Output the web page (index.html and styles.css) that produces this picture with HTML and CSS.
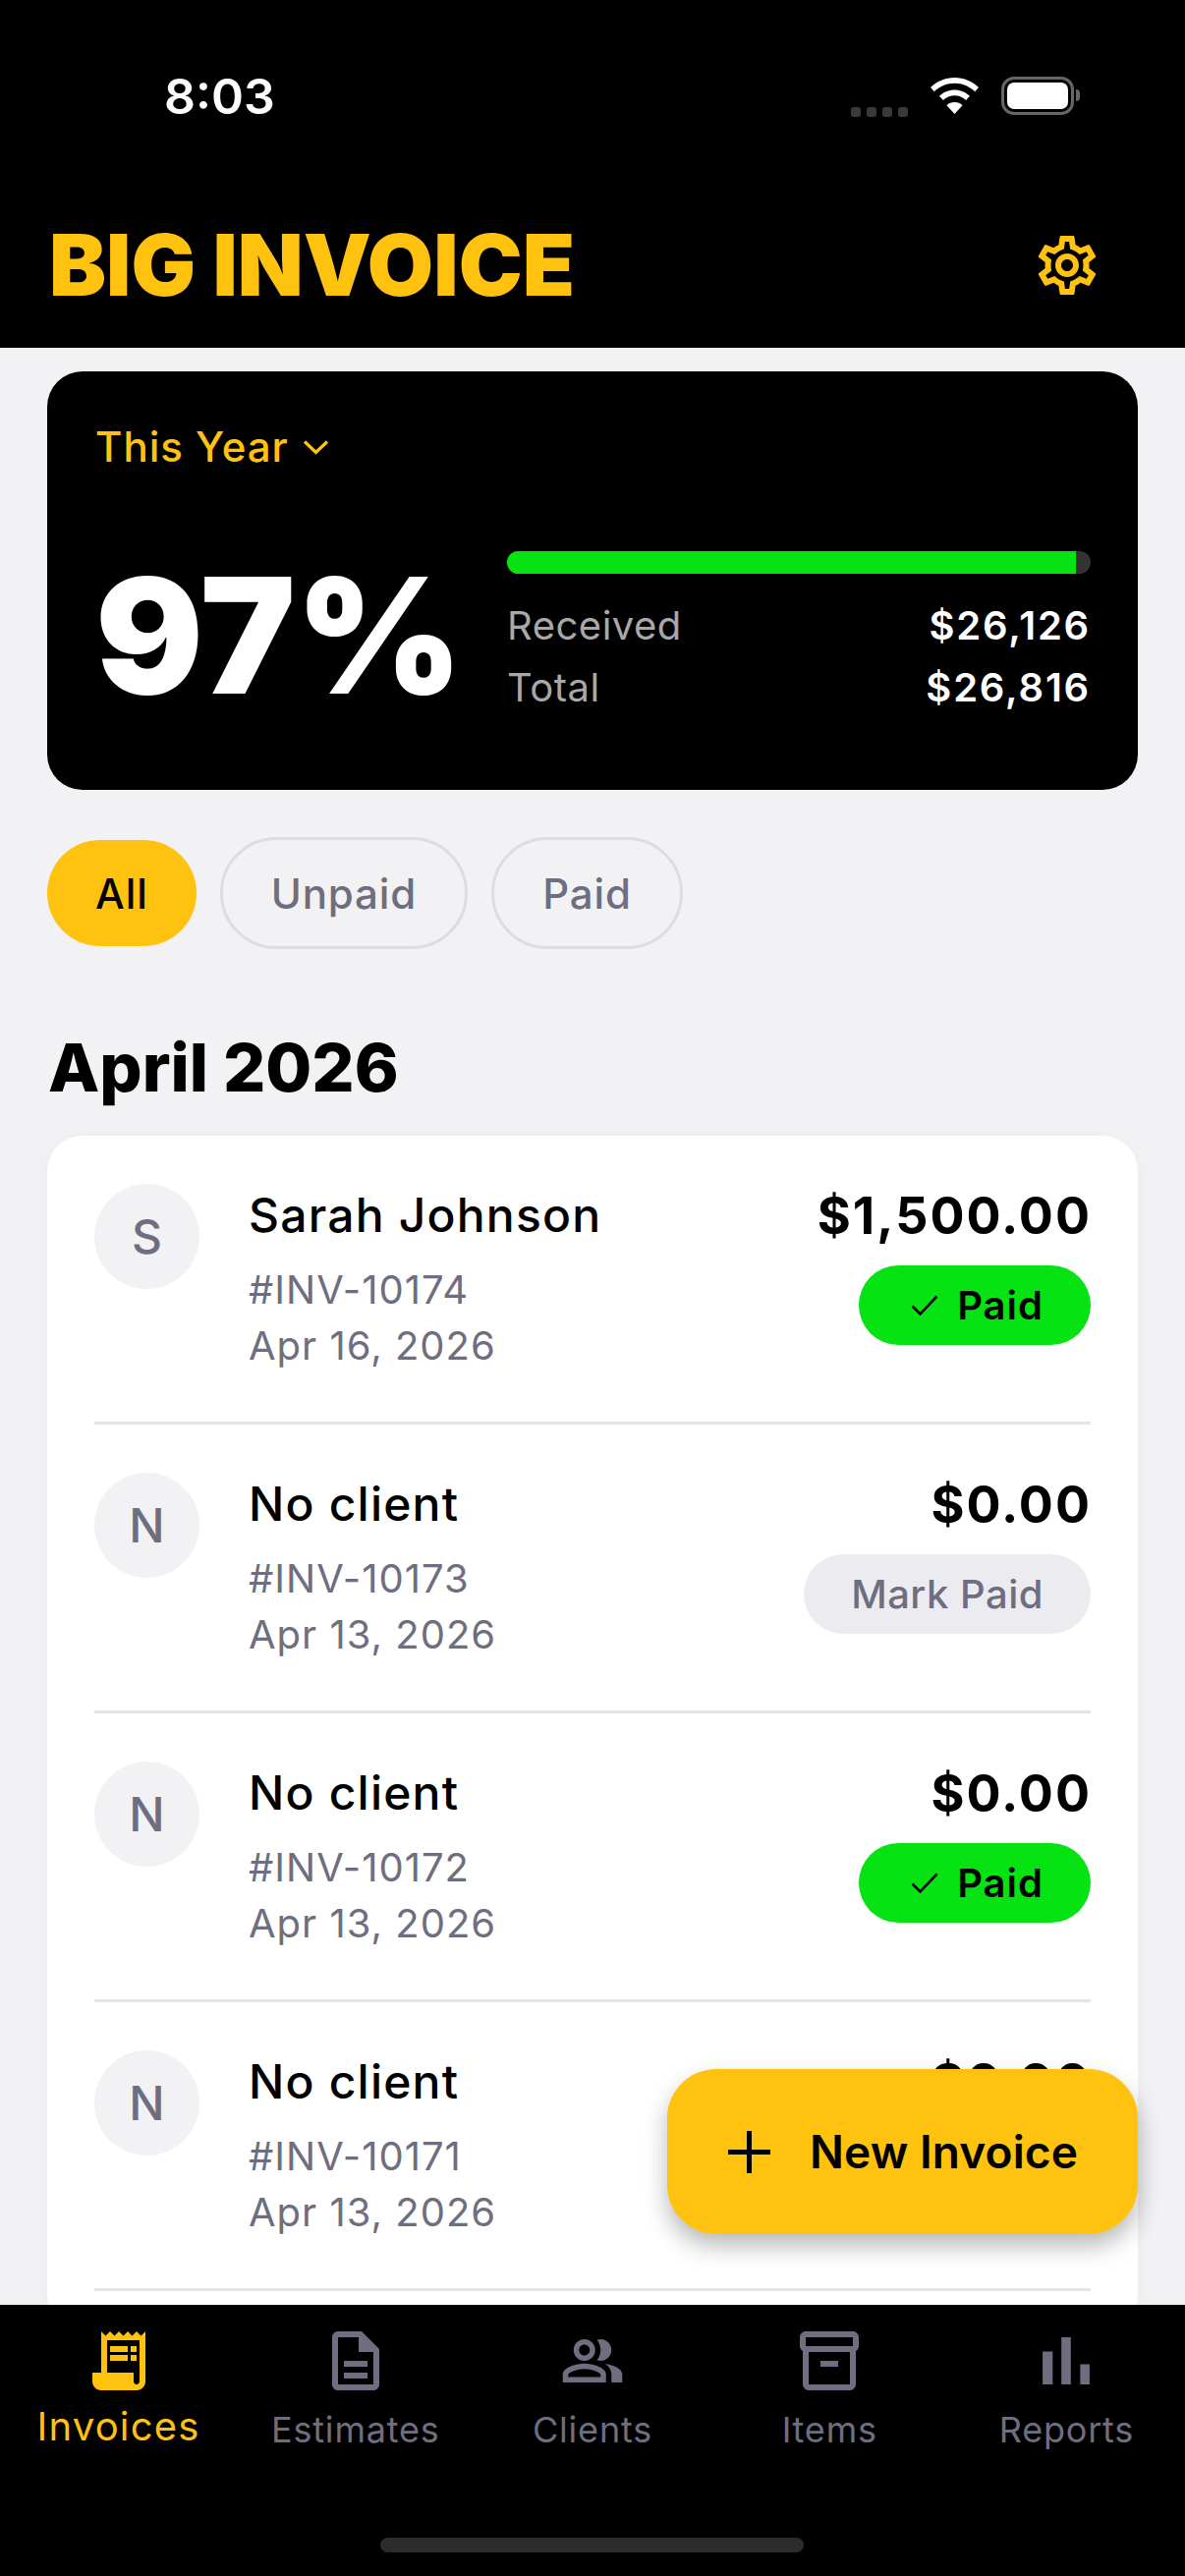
FILE: index.html
```html
<!DOCTYPE html>
<html lang="en">
<head>
<meta charset="utf-8">
<title>Big Invoice</title>
<link rel="stylesheet" href="styles.css">
</head>
<body>
<div class="phone">
  <header class="top">
    <div class="status">
      <span class="time">8:03</span>
      <div class="status-icons">
        <div class="dots"><i></i><i></i><i></i><i></i></div>
        <svg class="wifi" viewBox="0 0 49 37"><path fill="#fff" d="M24.5 0C15 0 6.500 3.800 0 10l3.800 4.300C9.300 9 16.500 5.800 24.500 5.800S39.700 9 45.200 14.300L49 10C42.500 3.800 34 0 24.500 0z"/><path fill="#fff" d="M24.500 12.500c-6 0-11.500 2.400-15.500 6.300l3.900 4.300c3-2.900 7.100-4.800 11.600-4.800s8.600 1.900 11.600 4.800l3.900-4.300c-4-3.900-9.500-6.300-15.500-6.300z"/><path fill="#fff" d="M24.500 25c-3.200 0-6 1.200-8 3.200L24.500 37l8-8.800c-2-2-4.800-3.200-8-3.200z"/></svg>
        <div class="battery"><div class="battery-body"><div class="battery-fill"></div></div><div class="battery-tip"></div></div>
      </div>
    </div>
    <div class="brand-row">
      <h1 class="brand">BIG INVOICE</h1>
      <svg class="gear" viewBox="0 0 24 24"><path fill="#FFC20E" d="M19.430 12.980c.04-.32.07-.64.07-.98 0-.34-.03-.66-.07-.98l2.110-1.650c.19-.15.24-.42.12-.64l-2-3.460c-.09-.16-.26-.25-.44-.25-.06 0-.12.01-.17.03l-2.490 1c-.52-.4-1.080-.73-1.690-.98l-.38-2.650C14.460 2.180 14.250 2 14 2h-4c-.25 0-.46.18-.49.42l-.38 2.650c-.61.25-1.170.59-1.690.98l-2.490-1c-.06-.02-.12-.03-.18-.03-.17 0-.34.09-.43.25l-2 3.460c-.13.22-.07.49.12.64l2.110 1.650c-.04.32-.07.65-.07.98 0 .33.03.66.07.98l-2.110 1.650c-.19.15-.24.42-.12.64l2 3.460c.09.16.26.25.44.25.06 0 .12-.01.17-.03l2.490-1c.52.4 1.080.73 1.690.98l.38 2.650c.03.24.24.42.49.42h4c.25 0 .46-.18.49-.42l.38-2.650c.61-.25 1.170-.59 1.690-.98l2.490 1c.06.02.12.03.18.03.17 0 .34-.09.43-.25l2-3.460c.12-.22.07-.49-.12-.64l-2.110-1.650zm-1.980-1.710c.04.31.05.52.05.73 0 .21-.02.43-.05.73l-.14 1.130.89.7 1.080.84-.7 1.210-1.270-.51-1.040-.42-.9.68c-.43.32-.84.56-1.250.73l-1.060.43-.16 1.130-.2 1.350h-1.400l-.19-1.350-.16-1.130-1.060-.43c-.43-.18-.83-.41-1.230-.71l-.91-.7-1.060.43-1.270.51-.7-1.210 1.080-.84.89-.7-.14-1.130c-.03-.31-.05-.54-.05-.74s.02-.43.05-.73l.14-1.130-.89-.7-1.080-.84.7-1.210 1.270.51 1.040.42.9-.68c.43-.32.84-.56 1.250-.73l1.060-.43.16-1.130.2-1.350h1.390l.19 1.350.16 1.130 1.060.43c.43.18.83.41 1.230.71l.91.7 1.060-.43 1.270-.51.7 1.210-1.070.85-.89.7.14 1.130zM12 8c-2.210 0-4 1.790-4 4s1.790 4 4 4 4-1.790 4-4-1.790-4-4-4zm0 6c-1.100 0-2-.9-2-2s.9-2 2-2 2 .9 2 2-.9 2-2 2z"/></svg>
    </div>
  </header>

  <main class="content">
    <section class="summary">
      <div class="period"><span>This Year</span><svg class="chev" viewBox="0 0 27 16"><path d="M2 2.500l11.500 11 11.500-11" fill="none" stroke="#FFC20E" stroke-width="3.200"/></svg></div>
      <div class="summary-body">
        <div class="percent">97%</div>
        <div class="stats">
          <div class="track"><div class="fill"></div></div>
          <div class="stat stat-first"><span class="stat-label">Received</span><span class="stat-value">$26,126</span></div>
          <div class="stat"><span class="stat-label">Total</span><span class="stat-value">$26,816</span></div>
        </div>
      </div>
    </section>

    <div class="chips">
      <button class="chip chip-on">All</button>
      <button class="chip">Unpaid</button>
      <button class="chip">Paid</button>
    </div>

    <h2 class="month">April 2026</h2>

    <section class="list">
      <article class="row">
        <div class="avatar">S</div>
        <div class="info">
          <div class="name">Sarah Johnson</div>
          <div class="meta meta-first">#INV-10174</div>
          <div class="meta">Apr 16, 2026</div>
        </div>
        <div class="side">
          <div class="amount">$1,500.00</div>
          <div class="badge badge-paid"><svg class="check" viewBox="0 0 28 22"><path d="M1.500 11.500l8 8 17-18" fill="none" stroke="#000" stroke-width="2.600"/></svg>Paid</div>
        </div>
      </article>
      <article class="row">
        <div class="avatar">N</div>
        <div class="info">
          <div class="name">No client</div>
          <div class="meta meta-first">#INV-10173</div>
          <div class="meta">Apr 13, 2026</div>
        </div>
        <div class="side">
          <div class="amount">$0.00</div>
          <div class="badge badge-mark">Mark Paid</div>
        </div>
      </article>
      <article class="row">
        <div class="avatar">N</div>
        <div class="info">
          <div class="name">No client</div>
          <div class="meta meta-first">#INV-10172</div>
          <div class="meta">Apr 13, 2026</div>
        </div>
        <div class="side">
          <div class="amount">$0.00</div>
          <div class="badge badge-paid"><svg class="check" viewBox="0 0 28 22"><path d="M1.500 11.500l8 8 17-18" fill="none" stroke="#000" stroke-width="2.600"/></svg>Paid</div>
        </div>
      </article>
      <article class="row">
        <div class="avatar">N</div>
        <div class="info">
          <div class="name">No client</div>
          <div class="meta meta-first">#INV-10171</div>
          <div class="meta">Apr 13, 2026</div>
        </div>
        <div class="side">
          <div class="amount">$0.00</div>
        </div>
      </article>
    </section>
  </main>

  <button class="fab"><svg class="plus" viewBox="0 0 43 43"><path d="M21.500 0v43M0 21.500h43" fill="none" stroke="#000" stroke-width="5"/></svg><span>New Invoice</span></button>

  <nav class="tabs">
    <div class="tab tab-on">
      <div class="tab-icon"><svg class="ico" viewBox="0 0 24 24"><path fill="#FFC20E" d="M19.500 3.500 18 2l-1.500 1.500L15 2l-1.500 1.500L12 2l-1.500 1.500L9 2 7.500 3.500 6 2v14H3v3c0 1.660 1.340 3 3 3h12c1.660 0 3-1.340 3-3V2l-1.500 1.500zM19 19c0 .55-.45 1-1 1s-1-.45-1-1v-3H8V5h11v14z"/><path fill="#FFC20E" d="M9 7h6v2H9zm7 0h2v2h-2zm-7 3h6v2H9zm7 0h2v2h-2z"/></svg></div>
      <span class="tab-label">Invoices</span>
    </div>
    <div class="tab">
      <div class="tab-icon"><svg class="ico" viewBox="0 0 24 24"><path fill="#6E6E80" d="M8 16h8v2H8zm0-4h8v2H8zm6-10H6c-1.100 0-2 .9-2 2v16c0 1.100.89 2 1.990 2H18c1.100 0 2-.9 2-2V8l-6-6zm4 18H6V4h7v5h5v11z"/></svg></div>
      <span class="tab-label">Estimates</span>
    </div>
    <div class="tab">
      <div class="tab-icon"><svg class="ico ico-group" viewBox="0 0 24 24"><path fill="#6E6E80" d="M16.670 13.130C18.040 14.060 19 15.320 19 17v3h4v-3c0-2.180-3.570-3.470-6.330-3.870zM15 12c2.210 0 4-1.790 4-4s-1.790-4-4-4c-.47 0-.91.1-1.330.24C14.500 5.270 15 6.580 15 8s-.5 2.730-1.330 3.760c.42.14.86.24 1.330.24zM9 12c2.210 0 4-1.790 4-4s-1.790-4-4-4-4 1.790-4 4 1.790 4 4 4zm0-6c1.100 0 2 .9 2 2s-.9 2-2 2-2-.9-2-2 .9-2 2-2zM9 13c-2.670 0-8 1.340-8 4v3h16v-3c0-2.660-5.330-4-8-4zm6 5H3v-.99C3.200 16.290 6.300 15 9 15s5.800 1.290 6 2v1z"/></svg></div>
      <span class="tab-label">Clients</span>
    </div>
    <div class="tab">
      <div class="tab-icon"><svg class="ico" viewBox="0 0 24 24"><path fill="#6E6E80" d="M20 2H4c-1 0-2 .9-2 2v3.010c0 .72.43 1.340 1 1.690V20c0 1.100 1.100 2 2 2h14c.9 0 2-.9 2-2V8.700c.57-.35 1-.97 1-1.690V4c0-1.100-1-2-2-2zm-1 18H5V9h14v11zm1-13H4V4h16v3z"/><path fill="#6E6E80" d="M9 12h6v2H9z"/></svg></div>
      <span class="tab-label">Items</span>
    </div>
    <div class="tab">
      <div class="tab-icon"><svg class="ico ico-bars" viewBox="0 0 24 24"><path fill="#6E6E80" d="M5 9.200h3V19H5zM10.600 5h2.800v14h-2.800zm5.600 8H19v6h-2.800z"/></svg></div>
      <span class="tab-label">Reports</span>
    </div>
    <div class="home-bar"></div>
  </nav>
</div>
</body>
</html>
```

FILE: styles.css
```css
* { box-sizing: border-box; margin: 0; padding: 0; }
html, body { background: #000; }
body { font-family: Inter, "Liberation Sans", sans-serif; }

.phone {
  position: relative;
  width: 1206px;
  height: 2622px;
  display: flex;
  flex-direction: column;
  overflow: hidden;
  background: #F2F2F5;
}

/* Header */
.top { height: 354px; flex: none; background: #000; padding-top: 68px; }
.status { height: 60px; display: flex; align-items: center; justify-content: space-between; padding: 0 107px 0 167px; }
.time { color: #fff; font-size: 50px; font-weight: 600; line-height: 60px; }
.status-icons { display: flex; align-items: center; }
.dots { display: flex; gap: 6px; margin-top: 32px; }
.dots i { display: block; width: 10px; height: 10px; border-radius: 3px; background: #3a3a3a; }
.wifi { width: 49px; height: 37px; margin-left: 23px; margin-top: -2px; }
.battery { display: flex; align-items: center; margin-left: 23px; margin-top: -2px; }
.battery-body { width: 74px; height: 39px; border: 3px solid #666; border-radius: 13px; padding: 3px; }
.battery-fill { width: 100%; height: 100%; background: #fff; border-radius: 7px; }
.battery-tip { width: 4px; height: 12px; background: #666; border-radius: 0 6px 6px 0; margin-left: 2px; }

.brand-row { display: flex; align-items: center; justify-content: space-between; padding: 0 84px 0 50px; margin-top: 106px; height: 72px; }
.brand { color: #FFC20E; font-size: 87px; font-weight: 900; line-height: 72px; letter-spacing: 0; }
.gear { width: 72px; height: 72px; flex: none; }

/* Content */
.content { flex: 1; min-height: 0; overflow: hidden; padding: 24px 48px 0; }

.summary { height: 426px; background: #000; border-radius: 36px; padding: 50px 48px 0 49px; }
.period { display: flex; align-items: center; gap: 14px; color: #FFC20E; font-size: 42px; font-weight: 500; letter-spacing: 1px; line-height: 54px; }
.chev { width: 27px; height: 16px; }
.summary-body { display: flex; align-items: center; margin-top: 79px; }
.percent { width: 419px; color: #fff; font-size: 163px; font-weight: 900; line-height: 130px; padding-top: 2px; }
.stats { flex: 1; }
.track { height: 23px; border-radius: 12px; background: #333; overflow: hidden; }
.fill { width: 97.4%; height: 100%; background: #06E212; }
.stat { display: flex; justify-content: space-between; align-items: center; height: 63px; font-size: 40px; letter-spacing: .5px; }
.stat-first { margin-top: 21px; }
.stat-label { color: #A8A8A8; }
.stat-value { color: #fff; font-weight: 600; letter-spacing: 1.800px; }

.chips { display: flex; align-items: center; gap: 24px; margin-top: 48px; }
.chip {
  font-family: inherit;
  height: 114px;
  padding: 0 49px;
  border: 3px solid #DCDDE0;
  border-radius: 57px;
  background: transparent;
  color: #6E6E80;
  font-size: 42px;
  font-weight: 500;
  letter-spacing: .9px;
}
.chip-on { height: 108px; padding: 0 49px; border: 0; background: #FFC20E; color: #000; }

.month { margin-top: 78px; font-size: 68px; font-weight: 800; line-height: 84px; color: #000; margin-left: 1px; }

.list { margin-top: 28px; background: #fff; border-radius: 36px; padding: 0 48px 40px; box-shadow: 0 2px 24px rgba(0, 0, 0, .03); }
.row { display: flex; height: 294px; padding-top: 49px; border-bottom: 3px solid #E5E5E7; }
.avatar { width: 107px; height: 107px; flex: none; border-radius: 50%; background: #F2F2F5; color: #6E6E80; font-size: 48px; font-weight: 500; display: flex; align-items: center; justify-content: center; }
.info { flex: 1; margin-left: 50px; }
.name { font-size: 48px; font-weight: 500; line-height: 64px; letter-spacing: 1.200px; color: #000; }
.meta { font-size: 40px; line-height: 57px; letter-spacing: 1px; color: #6E6E80; }
.meta-first { margin-top: 15px; }
.side { display: flex; flex-direction: column; align-items: flex-end; }
.amount { font-size: 52px; font-weight: 700; line-height: 66px; letter-spacing: 2px; color: #000; margin-right: -1px; }
.badge { display: flex; align-items: center; height: 81px; margin-top: 17px; border-radius: 41px; font-size: 40px; font-weight: 600; letter-spacing: 1px; }
.badge-paid { padding: 0 48px 0 53px; background: #06E212; color: #000; }
.check { width: 28px; height: 22px; margin-right: 19px; }
.badge-mark { padding: 0 48px; background: #ECECF0; color: #6E6E80; font-weight: 500; letter-spacing: .5px; }

/* Floating button */
.fab {
  position: absolute;
  left: 679px;
  top: 2106px;
  width: 479px;
  height: 168px;
  display: flex;
  align-items: center;
  padding-left: 62px;
  border: 0;
  border-radius: 50px;
  background: #FFC20E;
  box-shadow: 0 12px 24px rgba(0, 0, 0, .28);
  font-family: inherit;
  font-size: 46px;
  font-weight: 600;
  letter-spacing: .1px;
  color: #000;
}
.plus { width: 43px; height: 43px; margin-right: 40px; }

/* Tabs */
.tabs { position: relative; flex: none; height: 276px; background: #000; display: flex; padding: 21px 0 0; }
.tab { flex: 1; display: flex; flex-direction: column; align-items: center; color: #6E6E80; font-size: 36px; letter-spacing: .8px; }
.tab-icon { width: 84px; height: 72px; display: flex; align-items: center; justify-content: center; }
.ico { width: 72px; height: 72px; flex: none; }
.ico-group { width: 66px; height: 66px; }
.ico-bars { width: 82px; height: 82px; }
.tab-label { margin-top: 12px; line-height: 44px; }
.tab-on { color: #FFC20E; font-size: 40px; letter-spacing: 1.200px; }
.tab-on .tab-label { margin-top: 6px; line-height: 50px; }
.home-bar { position: absolute; left: 387px; bottom: 24px; width: 431px; height: 15px; border-radius: 8px; background: #2C2C2C; }
```
